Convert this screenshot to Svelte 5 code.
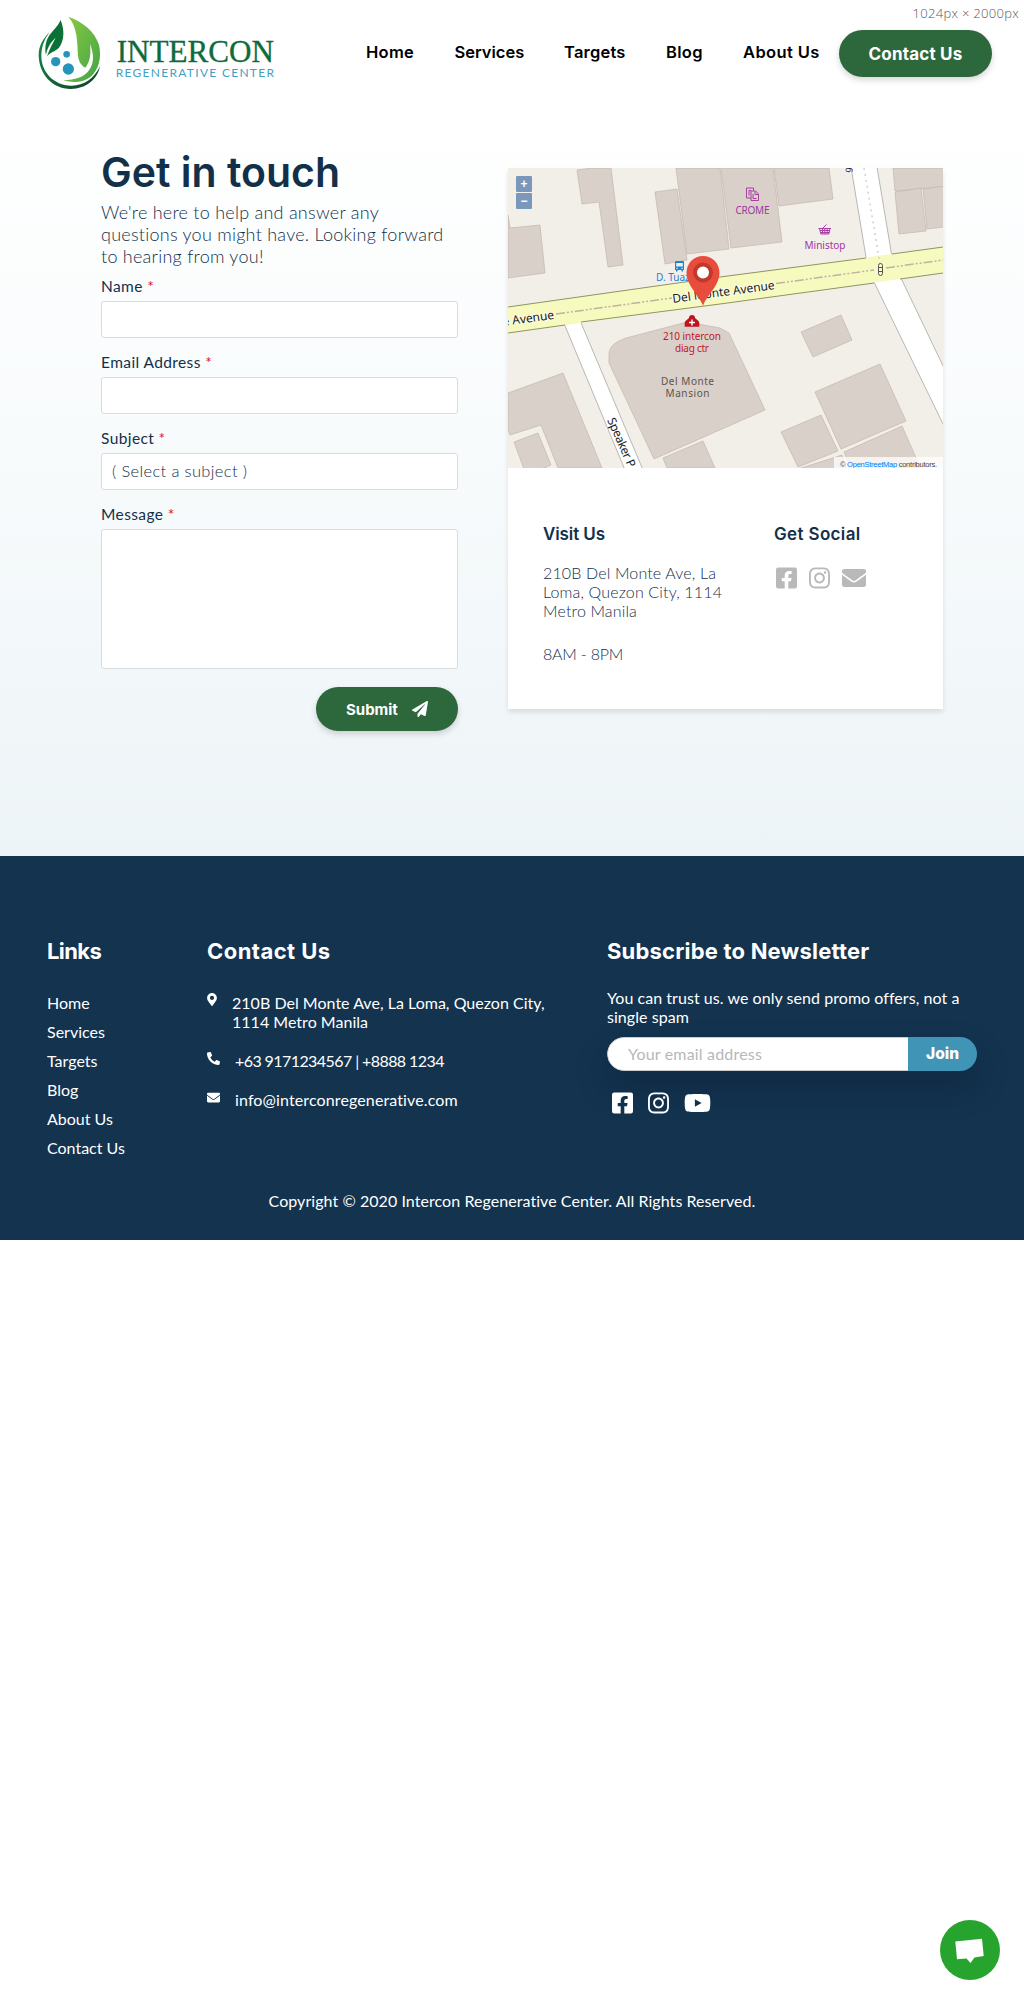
<script>
  const nav = [
    { label: 'Home', cls: 'n-home' },
    { label: 'Services', cls: 'n-services' },
    { label: 'Targets', cls: 'n-targets' },
    { label: 'Blog', cls: 'n-blog' },
    { label: 'About Us', cls: 'n-about' }
  ];
  const links = ['Home', 'Services', 'Targets', 'Blog', 'About Us', 'Contact Us'];

  // Building footprints of the map, in map pixels
  const buildings = [
    '0,47 2,60 32,57 37,105 0,110',
    '69,2 84,0 103,0 115,97 100,99 91,34 74,36',
    '147,24 169,21 179,92 157,96',
    '168,0 212,0 221,81 179,86',
    '213,0 265,0 274,74 223,80',
    '266,0 321,0 325,31 271,38',
    '385,0 436,0 436,19 387,23',
    '387,24 413,20 418,63 391,66',
    '415,21 436,18 436,59 419,61',
    '155,290 195,273 207,300 159,300',
    '0,225 55,205 94,300 50,300 33,257 2,267 0,262',
    '6,274 30,265 43,297 34,301 16,301',
    '293,164 333,147 344,172 305,189',
    '307,224 372,196 398,253 333,281',
    '273,264 313,247 330,283 290,299',
    '336,284 394,258 413,301 343,301',
    '290,301 334,287 339,301'
  ];

  const icons = {
    facebook: { box: '0 0 448 512', d: 'M400 32H48A48 48 0 0 0 0 80v352a48 48 0 0 0 48 48h137.25V327.69h-63V256h63v-54.64c0-62.15 37-96.48 93.67-96.48 27.14 0 55.52 4.84 55.52 4.84v61h-31.27c-30.81 0-40.42 19.12-40.42 38.73V256h68.78l-11 71.69h-57.78V480H400a48 48 0 0 0 48-48V80a48 48 0 0 0-48-48z' },
    instagram: { box: '0 0 448 512', d: 'M224.1 141c-63.6 0-114.9 51.3-114.9 114.9s51.3 114.9 114.9 114.9S339 319.5 339 255.900 287.700 141 224.100 141zm0 189.600c-41.100 0-74.700-33.500-74.700-74.700s33.500-74.700 74.700-74.700 74.700 33.500 74.700 74.700-33.600 74.700-74.700 74.700zm146.400-194.300c0 14.900-12 26.800-26.800 26.800-14.900 0-26.800-12-26.800-26.800s12-26.800 26.800-26.800 26.800 12 26.800 26.800zm76.100 27.200c-1.700-35.900-9.900-67.700-36.200-93.900-26.200-26.200-58-34.400-93.900-36.200-37-2.100-147.900-2.100-184.900 0-35.800 1.700-67.600 9.900-93.900 36.100s-34.400 58-36.200 93.900c-2.100 37-2.100 147.900 0 184.900 1.700 35.900 9.900 67.700 36.200 93.900s58 34.400 93.900 36.200c37 2.100 147.900 2.100 184.900 0 35.900-1.700 67.700-9.900 93.900-36.200 26.200-26.200 34.400-58 36.200-93.900 2.100-37 2.100-147.800 0-184.800zM398.800 388c-7.800 19.600-22.900 34.700-42.600 42.600-29.500 11.700-99.500 9-132.100 9s-102.700 2.600-132.100-9c-19.600-7.800-34.700-22.900-42.600-42.600-11.700-29.500-9-99.500-9-132.100s-2.600-102.700 9-132.100c7.800-19.600 22.900-34.700 42.600-42.600 29.500-11.700 99.500-9 132.100-9s102.700-2.600 132.100 9c19.600 7.800 34.700 22.900 42.600 42.600 11.700 29.500 9 99.500 9 132.100s2.700 102.700-9 132.100z' },
    envelope: { box: '0 0 512 512', d: 'M502.3 190.800c3.900-3.100 9.700-.2 9.700 4.700V400c0 26.500-21.500 48-48 48H48c-26.500 0-48-21.500-48-48V195.600c0-5 5.700-7.800 9.700-4.700 22.400 17.400 52.100 39.500 154.100 113.600 21.100 15.400 56.700 47.800 92.200 47.600 35.700.3 72-32.800 92.300-47.600 102-74.100 131.600-96.300 154-113.700zM256 320c23.200.4 56.600-29.200 73.400-41.400 132.700-96.300 142.800-104.700 173.400-128.700 5.800-4.500 9.200-11.500 9.200-18.900v-19c0-26.500-21.500-48-48-48H48c-26.500 0-48 21.500-48 48v19c0 7.400 3.400 14.300 9.200 18.900 30.600 23.900 40.700 32.400 173.400 128.700 16.800 12.200 50.200 41.800 73.400 41.400z' },
    youtube: { box: '0 0 576 512', d: 'M549.655 124.083c-6.281-23.650-24.787-42.276-48.284-48.597C458.781 64 288 64 288 64S117.220 64 74.629 75.486c-23.497 6.322-42.003 24.947-48.284 48.597-11.412 42.867-11.412 132.305-11.412 132.305s0 89.438 11.412 132.305c6.281 23.650 24.787 41.500 48.284 47.821C117.220 448 288 448 288 448s170.780 0 213.371-11.486c23.497-6.321 42.003-24.171 48.284-47.821 11.412-42.867 11.412-132.305 11.412-132.305s0-89.438-11.412-132.305zm-317.510 213.508V175.185l142.739 81.205-142.739 81.201z' },
    pin: { box: '0 0 384 512', d: 'M172.268 501.670C26.970 291.031 0 269.413 0 192 0 85.961 85.961 0 192 0s192 85.961 192 192c0 77.413-26.970 99.031-172.268 309.670-9.535 13.774-29.930 13.773-39.464 0zM192 272c44.183 0 80-35.817 80-80s-35.817-80-80-80-80 35.817-80 80 35.817 80 80 80z' },
    phone: { box: '0 0 512 512', d: 'M18.920 24.600 122.900.600c11.300-2.600 22.900 3.300 27.500 13.900l48 112c4.200 9.800 1.400 21.300-6.900 28l-60.600 49.600c36 76.700 98.900 140.500 177.200 177.200l49.600-60.600c6.800-8.300 18.200-11.100 28-6.900l112 48c10.700 4.700 16.600 16.300 14 27.600l-24 104C485.200 504.100 475.500 512 464 512 207.900 512 0 304.500 0 48c0-11.400 7.900-21.200 18.920-23.400z' },
    plane: { box: '0 0 512 512', d: 'M476 3.200 12.500 270.600c-18.100 10.400-15.800 35.600 2.200 43.200L121 358.400l287.300-253.200c5.500-4.900 13.300 2.600 8.600 8.300L176 407v80.500c0 23.600 28.500 32.900 42.500 15.800L282 426l124.600 52.200c14.200 6 30.400-2.900 33-18.200l72-432C515 7.800 493.300-6.800 476 3.200z' }
  };
</script>

{#snippet icon(name, cls)}
  <svg class="icon {cls}" viewBox={icons[name].box} aria-hidden="true"><path d={icons[name].d} /></svg>
{/snippet}

<div class="viewport-size">1024px × 2000px</div>

<header>
  <svg class="logo" viewBox="114 48 714 222" role="img" aria-label="Intercon Regenerative Center">
    <defs>
      <linearGradient id="lime" x1="0" y1="0" x2="1" y2="1">
        <stop offset="0" stop-color="#8ccb3f" />
        <stop offset="1" stop-color="#43a447" />
      </linearGradient>
      <linearGradient id="rim" x1="0" y1="0" x2="1" y2="1">
        <stop offset="0" stop-color="#14904a" />
        <stop offset="1" stop-color="#123f25" />
      </linearGradient>
    </defs>
    <path fill="url(#rim)" d="M149 96C126 119 116 140 116 166C117 223 157 267 212 267C260 266 292 238 300 199C283 236 250 258 213 257C161 256 124 216 124 168C124 143 132 119 149 96Z" />
    <path fill="#0c7137" d="M182 60C194 92 193 119 178 142C168 154 150 158 141 169C147 150 158 130 167 113C150 128 141 146 138 165C134 146 136 125 148 106C160 90 174 78 182 60Z" />
    <path fill="url(#lime)" d="M205 50C246 64 285 94 297 135C306 175 295 210 272 230C252 246 222 250 190 241C225 240 252 232 267 211C284 187 281 161 270 132C273 162 271 184 256 203C238 194 233 176 233 150C232 108 226 74 205 50Z" />
    <circle cx="200" cy="163" r="10" fill="#2795bb" />
    <circle cx="167" cy="185" r="14" fill="#2795bb" />
    <circle cx="205" cy="207" r="17" fill="#2795bb" />
    <text class="logo-name" x="350" y="185" textLength="472" lengthAdjust="spacingAndGlyphs">INTERCON</text>
    <text class="logo-sub" x="347" y="230" textLength="475" lengthAdjust="spacing">REGENERATIVE CENTER</text>
  </svg>
  <nav>
    {#each nav as item}
      <a class={item.cls} href="#top">{item.label}</a>
    {/each}
  </nav>
  <a class="pill contact" href="#top">Contact Us</a>
</header>

<main>
  <form>
    <h1>Get in touch</h1>
    <p class="intro">We're here to help and answer any<br />questions you might have. Looking forward<br />to hearing from you!</p>
    <label for="name">Name <i>*</i></label>
    <input id="name" />
    <label for="email">Email Address <i>*</i></label>
    <input id="email" />
    <label for="subject">Subject <i>*</i></label>
    <select id="subject"><option>( Select a subject )</option></select>
    <label for="message">Message <i>*</i></label>
    <textarea id="message"></textarea>
    <button class="pill submit" type="button">Submit {@render icon('plane', 'i-plane')}</button>
  </form>

  <section class="card">
    <div class="map">
      <svg viewBox="0 0 435 300" width="435" height="300" role="img" aria-label="Map of Del Monte Avenue">
        <rect width="435" height="300" fill="#f2efe9" />
        <g fill="#d9d0c9" stroke="#c3b6ad" stroke-width=".7">
          {#each buildings as points}
            <polygon {points} />
          {/each}
          <path d="M101 195V186Q101 178 111 173L118 170L179 154L212 160L221 165L257 242L146 291Z" />
        </g>
        <g fill="#fff" stroke="#aaa6a2" stroke-width=".8">
          <path d="M343 -1L359 95H385L369 -1Z" />
          <path d="M365 112L437 260V202L391 106Z" />
          <path d="M55 153L117 302H135L71 150Z" />
        </g>
        <path fill="#f7fabf" d="M0 139L212 109L435 79V105L212 136L0 165Z" />
        <g fill="none" stroke="#8d9562" stroke-width="1">
          <path d="M0 139L212 109L358 90M384 86L435 79" />
          <path d="M0 165L57 157M73 154L212 136L366 115M392 111L435 105" />
        </g>
        <path fill="none" stroke="#bcb3a2" stroke-width="1.500" stroke-dasharray="9 2 2 2 2 2" d="M48 146L164 130M268 115.500L366 102M378 100L435 92" />
        <path fill="none" stroke="#c9c4c0" stroke-width="1.200" stroke-dasharray="2 4" d="M356 0L372 96" />
        <g class="m-road">
          <text transform="translate(-5 158) rotate(-8)">e Avenue</text>
          <text transform="translate(165 135) rotate(-7.800)" textLength="103">Del Monte Avenue</text>
          <text transform="translate(99 252) rotate(66)" textLength="53">Speaker P</text>
          <text class="m-cut" transform="translate(342 5) rotate(-80)">g</text>
        </g>
        <g class="m-shop">
          <text x="244.500" y="45.500" textLength="34">CROME</text>
          <text x="317" y="80.500" textLength="41">Ministop</text>
          <g fill="none" stroke="#a83fa4" stroke-width="1">
            <path d="M243 30h-4.500v-10h7v2.500M241 22.500h2M241 22.500v5" />
            <path d="M243 23h4.500l3 3v6.500h-7.500zM247 23.500v3h3M245 26v4.500h3.500" />
            <path d="M310.500 60.500h12.500M311.500 60.500l1.300 5.500h8l1.300-5.500M312 62.500h10M312.500 64.500h9M314.500 60.500v5.500M316.800 60.500v5.500M319.200 60.500v5.500M315 60l3.500-3.500" />
          </g>
        </g>
        <text class="m-bus" x="148" y="113" textLength="46">D. Tuazon</text>
        <path fill="#1b86d0" fill-rule="evenodd" d="M168 93h7q1 0 1 1v8h-1v1.500h-1.500V102h-4v1.500H168V102h-1v-8q0-1 1-1zM168.200 95v3.500h6.600V95zM168.300 99.700v1.200h1.300v-1.200zM173.400 99.700v1.200h1.300v-1.200z" />
        <path fill="#bf1420" d="M181 150q0-3 3-3t3 3l3.500 3q.8 1 .8 2v3.700h-14.600V155q0-1 .8-2z" />
        <path stroke="#fff" stroke-width="1.400" d="M184 151.500v6M181 154.500h6" />
        <g class="m-clinic">
          <text x="184" y="172" textLength="58">210 intercon</text>
          <text x="184" y="183.500" textLength="34">diag ctr</text>
        </g>
        <g class="m-place">
          <text x="179.500" y="216.500" textLength="53">Del Monte</text>
          <text x="179.500" y="229" textLength="44">Mansion</text>
        </g>
        <g fill="none" stroke="#555" stroke-width="1">
          <rect x="370.500" y="95.500" width="4" height="12" rx="2" />
          <path d="M370.500 99.500h4M370.500 103.500h4" />
        </g>
        <path fill="#e84c3d" d="M195 138C192 128 178.500 118 178.500 104.500a16.500 16.500 0 0 1 33 0C211.500 118 198 128 195 138Z" />
        <circle cx="195" cy="104.500" r="8" fill="#fff" stroke="#c0392b" stroke-width="4" />
        <rect x="326" y="289" width="109" height="11" fill="#fff" opacity=".75" />
        <text class="m-credit" x="332" y="299.200" textLength="97">© <tspan fill="#0078ff">OpenStreetMap</tspan> contributors.</text>
      </svg>
      <div class="zoom"><button type="button">+</button><button type="button">−</button></div>
    </div>
    <div class="details">
      <div class="visit">
        <h2>Visit Us</h2>
        <p>210B Del Monte Ave, La<br />Loma, Quezon City, 1114<br />Metro Manila</p>
        <p class="hours">8AM - 8PM</p>
      </div>
      <div class="social">
        <h2>Get Social</h2>
        <div class="social-icons">
          {@render icon('facebook', 'i-24')}
          {@render icon('instagram', 'i-24')}
          {@render icon('envelope', 'i-mail')}
        </div>
      </div>
    </div>
  </section>
</main>

<footer>
  <div class="cols">
    <div class="c-links">
      <h3>Links</h3>
      <ul>
        {#each links as link}
          <li>{link}</li>
        {/each}
      </ul>
    </div>
    <div class="c-contact">
      <h3>Contact Us</h3>
      <div class="row first">{@render icon('pin', 'i-pin')}<span>210B Del Monte Ave, La Loma, Quezon City,<br />1114 Metro Manila</span></div>
      <div class="row">{@render icon('phone', 'i-small')}<span class="tel">+63 9171234567 | +8888 1234</span></div>
      <div class="row">{@render icon('envelope', 'i-small')}<span class="mail">info@interconregenerative.com</span></div>
    </div>
    <div class="c-news">
      <h3>Subscribe to Newsletter</h3>
      <p>You can trust us. we only send promo offers, not a<br />single spam</p>
      <div class="join">
        <input placeholder="Your email address" />
        <button type="button">Join</button>
      </div>
      <div class="foot-icons">
        {@render icon('facebook', 'i-24')}
        {@render icon('instagram', 'i-24')}
        {@render icon('youtube', 'i-yt')}
      </div>
    </div>
  </div>
  <p class="copy">Copyright © 2020 Intercon Regenerative Center. All Rights Reserved.</p>
</footer>

<button class="chat" type="button" aria-label="Chat">
  <svg viewBox="0 0 60 60" width="60" height="60"><path fill="#fff" d="M15.300 21.500L42 18.700L43.700 36L34.500 37.500L30.500 43L26.500 38.500L17 39.300Z" /></svg>
</button>

<style>
  :global(body) {
    background: #fff;
    font-family: Lato, 'Open Sans', sans-serif;
    color: #13304b;
  }
  :global(#app *) { box-sizing: border-box; }
  h1, h2, h3, p, ul { margin: 0; padding: 0; }
  h1, h2, h3, nav, .pill, .join button { font-family: Inter, sans-serif; }
  button, input, select, textarea { font: inherit; }
  a { text-decoration: none; color: #000; }
  .icon { display: block; fill: currentColor; flex: none; }

  .viewport-size {
    position: absolute;
    top: 4px;
    right: 5px;
    font: 300 13px/19px 'Open Sans', sans-serif;
    letter-spacing: .3px;
    color: #555;
  }

  header {
    height: 106px;
    display: flex;
    align-items: flex-start;
    padding: 16px 32px 0 38px;
  }
  .logo { width: 238px; height: 74px; flex: none; }
  .logo-name { font: 94px 'Liberation Serif', serif; fill: #0d6b3c; stroke: #0d6b3c; stroke-width: 1; }
  .logo-sub { font: 36px Lato, sans-serif; fill: #3f9fc4; }
  nav { display: flex; margin: 24px 0 0 90px; font-size: 16.500px; line-height: 24px; font-weight: 600; white-space: nowrap; }
  nav a { flex: none; }
  .n-home { width: 88.500px; letter-spacing: .3px; }
  .n-services { width: 109.500px; letter-spacing: 0; }
  .n-targets { width: 102px; letter-spacing: .2px; }
  .n-blog { width: 77px; letter-spacing: .3px; }
  .n-about { width: 76px; letter-spacing: .4px; }
  .pill {
    background: #2d683c;
    color: #fff;
    border: 0;
    border-radius: 24px;
    box-shadow: 0 3px 6px rgba(0, 0, 0, .16);
    font-weight: 700;
    display: flex;
    align-items: center;
  }
  .contact { width: 153px; height: 47px; margin: 14px 0 0 auto; justify-content: center; font-size: 17px; letter-spacing: .2px; }

  main {
    height: 750px;
    display: flex;
    align-items: flex-start;
    padding: 0 81px 0 101px;
    background: linear-gradient(#fff, #f8fbfc 45%, #f3f8fa 70%, #edf4f7);
  }
  form { width: 357px; padding-top: 40px; display: flex; flex-direction: column; }
  h1 { font-size: 41px; line-height: 52px; font-weight: 600; letter-spacing: 0; white-space: nowrap; }
  .intro { margin-top: 3px; font-size: 18px; line-height: 22px; font-weight: 300; letter-spacing: .25px; white-space: nowrap; color: #13304b; }
  label { margin-top: 7px; font-size: 15.500px; line-height: 24px; height: 27px; letter-spacing: .4px; }
  label i { color: #e3112d; font-style: normal; }
  form input, form select, textarea {
    width: 357px;
    height: 37px;
    margin: 0 0 5px;
    border: 1px solid #d9dddf;
    border-radius: 3px;
    background: #fff;
    color: #13304b;
    outline: 0;
  }
  form input + label, form select + label { margin-top: 7px; }
  form select { appearance: none; padding: 0 10px 2px; font-size: 16.500px; font-weight: 300; letter-spacing: .35px; }
  textarea { height: 140px; resize: none; margin: 0; }
  .submit { align-self: flex-end; width: 142px; height: 44px; margin-top: 18px; padding: 0 30px; justify-content: space-between; font-size: 15px; letter-spacing: 0; }
  .i-plane { width: 16px; height: 16px; }

  .card { width: 435px; height: 541px; margin: 62px 0 0 auto; background: #fff; box-shadow: 0 3px 5px rgba(0, 0, 0, .11); }
  .map { height: 300px; position: relative; overflow: hidden; }
  .map svg { display: block; }
  .map text { font-family: 'Noto Sans', sans-serif; }
  .map .m-road text { font-size: 12px; fill: #1b1b1b; stroke: #fff; stroke-opacity: .6; stroke-width: 2px; paint-order: stroke; }
  .map .m-road .m-cut { font-size: 9px; }
  .m-shop text, .m-clinic text, .m-place text { text-anchor: middle; font-size: 10px; }
  .m-shop text { fill: #a234a4; }
  .m-clinic text { fill: #bf1828; }
  .m-place text { fill: #5b5450; }
  .m-bus { font-size: 10px; fill: #2a7ce0; }
  .map .m-credit { font-family: 'Liberation Sans', sans-serif; font-size: 7.500px; fill: #444; }
  .zoom { position: absolute; left: 8px; top: 8px; display: grid; gap: 1px; }
  .zoom button { width: 16px; height: 16px; padding: 0; border: 0; border-radius: 1px; background: #7b98bc; color: #fff; font: 700 12px/15px 'Liberation Sans', sans-serif; }
  .details { display: flex; padding: 54px 36px 0 35px; }
  .visit { width: 231px; }
  h2 { font-size: 17px; line-height: 24px; font-weight: 600; letter-spacing: -.1px; }
  .social h2 { letter-spacing: .35px; }
  .details p { margin-top: 17px; font-size: 16px; line-height: 19px; font-weight: 300; letter-spacing: .15px; white-space: nowrap; color: #13304b; }
  .details .hours { margin-top: 24px; letter-spacing: -.2px; }
  .social-icons { display: flex; margin: 20px 0 0 2px; gap: 12px; color: #b9b9b9; }
  .i-24 { width: 21px; height: 24px; }
  .i-mail { width: 24px; height: 24px; }

  footer { height: 384px; background: #13334f; color: #fff; font-size: 16px; line-height: 19px; padding: 80px 47px 0; }
  .cols { display: flex; height: 248px; }
  h3 { font-size: 22px; line-height: 30px; font-weight: 700; letter-spacing: .2px; white-space: nowrap; }
  .c-links { width: 160px; }
  .c-links h3 { letter-spacing: -.6px; }
  .c-contact { width: 400px; }
  .c-contact h3 { letter-spacing: .45px; }
  ul { list-style: none; margin-top: 22px; }
  li { line-height: 29px; letter-spacing: 0; }
  .row { display: flex; margin-top: 20px; white-space: nowrap; letter-spacing: .02px; }
  .row.first { margin-top: 27px; }
  .row span { margin-left: 15px; }
  .row .tel { letter-spacing: -.58px; }
  .row .mail { letter-spacing: .12px; }
  .i-pin { width: 10px; height: 13px; }
  .i-small { width: 13px; height: 13px; margin-top: 1px; }
  .c-news { width: 370px; }
  .c-news p { margin-top: 22px; letter-spacing: .05px; white-space: nowrap; }
  .join { width: 370px; height: 34px; margin-top: 11px; display: flex; border-radius: 17px; overflow: hidden; box-shadow: 0 16px 32px rgba(10, 20, 40, .3); }
  .join input { width: 301px; border: 1px solid #ccc; border-right: 0; border-radius: 17px 0 0 17px; padding: 0 20px 2px; background: #fff; letter-spacing: .18px; outline: 0; }
  .join input::placeholder { color: #b5b8bb; opacity: 1; }
  .join button { flex: 1; border: 0; padding: 0 0 1px; background: #4095b7; color: #fff; font-size: 15.500px; font-weight: 800; letter-spacing: 0; }
  .foot-icons { display: flex; margin: 20px 0 0 5px; gap: 15px; }
  .i-yt { width: 27px; height: 24px; }
  .copy { margin-top: 7px; text-align: center; letter-spacing: .06px; }

  .chat { position: absolute; left: 940px; top: 1920px; width: 60px; height: 60px; padding: 0; border: 0; border-radius: 50%; background: #27a42e; }
  .chat svg { display: block; }
</style>
